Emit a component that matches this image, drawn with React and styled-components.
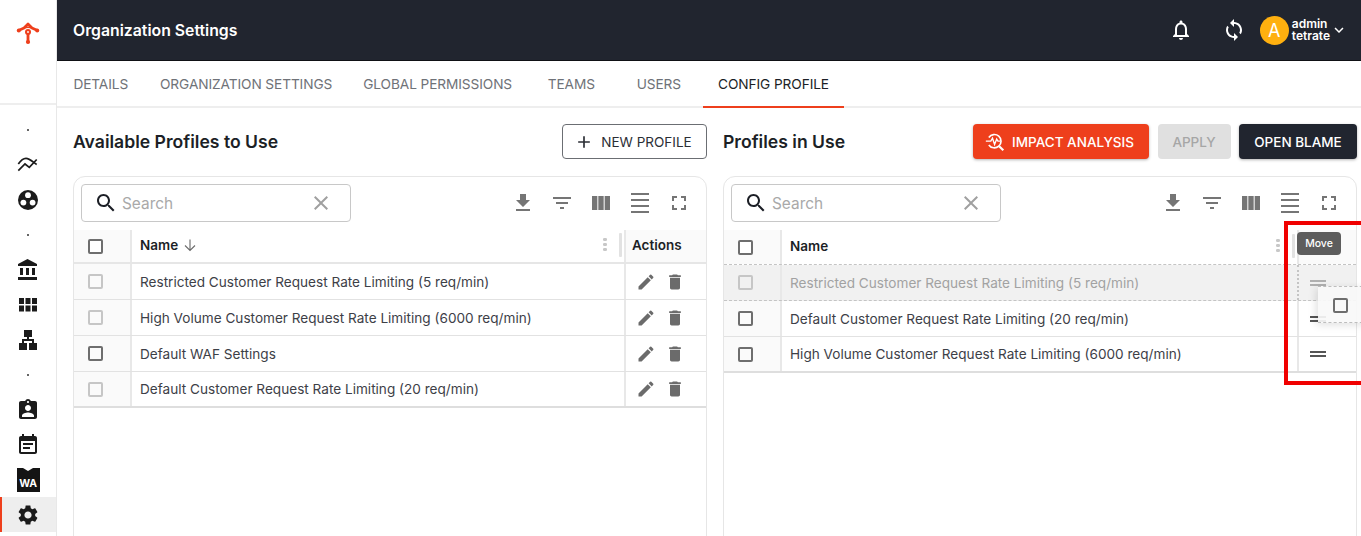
import React from 'react';
import styled, { createGlobalStyle } from 'styled-components';

const GlobalStyle = createGlobalStyle`
  html, body { margin: 0; padding: 0; height: 100%; overflow: hidden; background: #fff; }
  body { font-family: Inter, "Liberation Sans", sans-serif; color: #1c1f26; }
  * { box-sizing: border-box; }
`;

const ICONS = {
  bell: 'M12 22c1.1 0 2-.9 2-2h-4c0 1.1.89 2 2 2zm6-6v-5c0-3.07-1.64-5.64-4.5-6.32V4c0-.83-.67-1.5-1.5-1.5s-1.5.67-1.5 1.5v.68C7.63 5.36 6 7.92 6 11v5l-2 2v1h16v-1l-2-2zm-2 1H8v-6c0-2.48 1.51-4.5 4-4.5s4 2.02 4 4.5v6z',
  sync: 'M12 4V1L8 5l4 4V6c3.31 0 6 2.69 6 6 0 1.01-.25 1.97-.7 2.8l1.46 1.46C19.54 15.03 20 13.57 20 12c0-4.42-3.58-8-8-8zm0 14c-3.31 0-6-2.69-6-6 0-1.01.25-1.97.7-2.8L5.24 7.74C4.46 8.97 4 10.43 4 12c0 4.42 3.58 8 8 8v3l4-4-4-4v3z',
  chevron: 'M7.41 8.59 12 13.17l4.59-4.58L18 10l-6 6-6-6z',
  search: 'M15.5 14h-.79l-.28-.27C15.41 12.59 16 11.11 16 9.5 16 5.91 13.09 3 9.5 3S3 5.91 3 9.5 5.91 16 9.5 16c1.61 0 3.09-.59 4.23-1.57l.27.28v.79l5 4.99L20.49 19l-4.99-5zm-6 0C7.01 14 5 11.99 5 9.5S7.01 5 9.5 5 14 7.01 14 9.5 11.99 14 9.5 14z',
  close: 'M19 6.41 17.59 5 12 10.59 6.41 5 5 6.41 10.59 12 5 17.59 6.41 19 12 13.41 17.59 19 19 17.59 13.41 12z',
  download: 'M19 9h-4V3H9v6H5l7 7 7-7zM5 18v2h14v-2H5z',
  filter: 'M10 18h4v-2h-4v2zM3 6v2h18V6H3zm3 7h12v-2H6v2z',
  columns: 'M14.67 5v14H9.33V5h5.34zm1 14H21V5h-5.33v14zm-7.34 0V5H3v14h5.33z',
  density: 'M3 2h18v2H3zm0 6h18v2H3zm0 6h18v2H3zm0 6h18v2H3z',
  fullscreen: 'M7 14H5v5h5v-2H7v-3zm-2-4h2V7h3V5H5v5zm12 7h-3v2h5v-5h-2v3zM14 5v2h3v3h2V5h-5z',
  edit: 'M3 17.25V21h3.75L17.81 9.94l-3.75-3.75L3 17.25zM20.71 7.04c.39-.39.39-1.02 0-1.41l-2.34-2.34a.9959.9959 0 0 0-1.41 0l-1.83 1.83 3.75 3.75 1.83-1.83z',
  trash: 'M6 19c0 1.1.9 2 2 2h8c1.1 0 2-.9 2-2V7H6v12zM19 4h-3.5l-1-1h-5l-1 1H5v2h14V4z',
  plus: 'M19 13h-6v6h-2v-6H5v-2h6V5h2v6h6v2z',
  bank: 'M4 10v7h3v-7H4zm6 0v7h3v-7h-3zM2 22h19v-3H2v3zm14-12v7h3v-7h-3zm-4.5-9L2 6v2h19V6l-9.5-5z',
  grid: 'M3 5h5v6H3zm6.5 0h5v6h-5zM16 5h5v6h-5zM3 12.5h5v6H3zm6.5 0h5v6h-5zm6.5 0h5v6h-5z',
  lan: 'M13 22h8v-7h-3v-4h-5V9h3V2H8v7h3v2H6v4H3v7h8v-7H8v-2h8v2h-3z',
  badge: 'M19 3h-4.18C14.4 1.84 13.3 1 12 1s-2.4.84-2.82 2H5c-1.1 0-2 .9-2 2v14c0 1.1.9 2 2 2h14c1.1 0 2-.9 2-2V5c0-1.1-.9-2-2-2zm-7 0c.55 0 1 .45 1 1s-.45 1-1 1-1-.45-1-1 .45-1 1-1zm0 4c1.66 0 3 1.34 3 3s-1.34 3-3 3-3-1.34-3-3 1.34-3 3-3zm6 12H6v-1.4c0-2 4-3.1 6-3.1s6 1.1 6 3.1V19z',
  event: 'M17 10H7v2h10v-2zm2-7h-1V1h-2v2H8V1H6v2H5c-1.11 0-1.99.9-1.99 2L3 19c0 1.1.89 2 2 2h14c1.1 0 2-.9 2-2V5c0-1.1-.9-2-2-2zm0 16H5V8h14v11zm-5-5H7v2h7v-2z',
  gear: 'M19.14 12.94c.04-.3.06-.61.06-.94 0-.32-.02-.64-.07-.94l2.03-1.58c.18-.14.23-.41.12-.61l-1.92-3.32c-.12-.22-.37-.29-.59-.22l-2.39.96c-.5-.38-1.03-.7-1.62-.94l-.36-2.54c-.04-.24-.24-.41-.48-.41h-3.84c-.24 0-.43.17-.47.41l-.36 2.54c-.59.24-1.13.57-1.62.94l-2.39-.96c-.22-.08-.47 0-.59.22L2.74 8.87c-.12.21-.08.47.12.61l2.03 1.58c-.05.3-.09.63-.09.94s.02.64.07.94l-2.03 1.58c-.18.14-.23.41-.12.61l1.92 3.32c.12.22.37.29.59.22l2.39-.96c.5.38 1.03.7 1.62.94l.36 2.54c.05.24.24.41.48.41h3.84c.24 0 .44-.17.47-.41l.36-2.54c.59-.24 1.13-.56 1.62-.94l2.39.96c.22.08.47 0 .59-.22l1.92-3.32c.12-.22.07-.47-.12-.61l-2.01-1.58zM12 15.6c-1.98 0-3.6-1.62-3.6-3.6s1.62-3.6 3.6-3.6 3.6 1.62 3.6 3.6-1.62 3.6-3.6 3.6z',
};

const Svg = styled.svg`
  display: block;
  flex: none;
  fill: currentColor;
  width: ${p => p.$size || 24}px;
  height: ${p => p.$size || 24}px;
`;

const Icon = ({ name, size }) => (
  <Svg $size={size} viewBox="0 0 24 24"><path d={ICONS[name]} /></Svg>
);

const Page = styled.div`
  position: relative;
  display: grid;
  grid-template-columns: 57px 1fr;
  width: 1361px;
  height: 536px;
  overflow: hidden;
`;

/* left rail */
const Rail = styled.aside`
  border-right: 1px solid #e8e8e8;
  height: 536px;
`;
const LogoBox = styled.div`
  height: 105px;
  border-bottom: 2px solid #eee;
  padding-top: 21px;
  display: flex;
  justify-content: center;
  align-items: flex-start;
`;
const RailList = styled.nav`
  padding-top: 7px;
  display: flex;
  flex-direction: column;
`;
const RailItem = styled.div`
  height: 35px;
  display: flex;
  align-items: center;
  justify-content: center;
  color: #1b1b1b;
  ${p => p.$active && `
    background: #eeeeee;
    border-left: 2px solid #ee3f1c;
    padding-right: 2px;
  `}
`;
const RailDot = styled.span`
  width: 2px;
  height: 2px;
  border-radius: 50%;
  background: #333;
`;
const WaBadge = styled.div`
  position: relative;
  width: 23px;
  height: 24px;
  background: #141414;
  color: #fff;
  font-size: 10.5px;
  font-weight: 700;
  line-height: 1;
  text-align: center;
  padding-top: 11px;
  letter-spacing: -0.3px;
  &::before {
    content: '';
    position: absolute;
    top: 0;
    left: 6px;
    border-left: 5.5px solid transparent;
    border-right: 5.5px solid transparent;
    border-top: 3px solid #fff;
  }
`;

const Main = styled.div`
  display: flex;
  flex-direction: column;
  min-width: 0;
`;

/* top bar */
const TopBar = styled.header`
  height: 61px;
  background: #21252f;
  border-bottom: 1px solid #0f1115;
  color: #fff;
  display: flex;
  align-items: center;
  padding: 0 13px 0 16px;
`;
const PageTitle = styled.h1`
  flex: 1;
  margin: 0;
  font-size: 15.8px;
  font-weight: 600;
`;
const TopAction = styled.span`
  margin-right: ${p => p.$gap}px;
  display: block;
`;
const Avatar = styled.div`
  width: 29px;
  height: 29px;
  border-radius: 50%;
  background: #ffb00f;
  display: flex;
  align-items: center;
  justify-content: center;
  font-size: 18px;
  margin-right: 3px;
`;
const UserText = styled.div`
  font-size: 12px;
  font-weight: 600;
  line-height: 12.5px;
`;

/* tabs */
const TabBar = styled.div`
  height: 47px;
  border-bottom: 2px solid #eee;
  display: flex;
`;
const Tab = styled.div`
  min-width: 87.5px;
  padding: 0 15.5px;
  height: 47px;
  display: flex;
  align-items: center;
  justify-content: center;
  font-size: 13.7px;
  letter-spacing: -0.1px;
  color: ${p => (p.$active ? '#1c1f26' : '#6f7278')};
  border-bottom: 2px solid ${p => (p.$active ? '#ee3f1c' : 'transparent')};
`;

/* panels */
const Panels = styled.div`
  display: grid;
  grid-template-columns: 634px 634px;
  gap: 16px;
  padding: 16px 4px 0 16px;
`;
const Panel = styled.section`
  min-width: 0;
`;
const PanelHead = styled.div`
  height: 35px;
  display: flex;
  align-items: center;
  gap: 8.5px;
  margin-bottom: 17px;
`;
const PanelTitle = styled.h2`
  flex: 1;
  margin: 0;
  font-size: 17.6px;
  font-weight: 600;
`;
const Button = styled.button`
  height: 35px;
  border-radius: 4px;
  font: 500 13.5px Inter, "Liberation Sans", sans-serif;
  display: flex;
  align-items: center;
  gap: 7px;
  justify-content: center;
  width: ${p => p.$width}px;
  padding: 0;
  border: 1px solid transparent;
  ${p => p.$variant === 'outline' && `
    background: #fff; color: #2b2e35; border-color: #6b6e73; font-weight: 400; padding-right: 3px;
  `}
  ${p => p.$variant === 'danger' && `
    background: #ee3f1c; color: #fff; box-shadow: 0 1px 3px rgba(0,0,0,.3); padding-right: 3px;
  `}
  ${p => p.$variant === 'disabled' && `
    background: #e0e0e0; color: #a6a6a6;
  `}
  ${p => p.$variant === 'dark' && `
    background: #21252f; color: #fff; box-shadow: 0 1px 3px rgba(0,0,0,.3);
  `}
`;

const Card = styled.div`
  height: 400px;
  border: 1px solid #e6e6e6;
  border-radius: 12px 12px 0 0;
`;
const Toolbar = styled.div`
  height: 53px;
  padding: 7px 0 0 7px;
  display: flex;
`;
const SearchBox = styled.div`
  width: 270px;
  height: 38px;
  border: 1px solid #c8c8c8;
  border-radius: 4px;
  display: flex;
  align-items: center;
  padding: 0 17px 0 12px;
  color: #1c1f26;
`;
const SearchText = styled.span`
  flex: 1;
  margin-left: 4px;
  font-size: 15.4px;
  color: #a9a9a9;
`;
const ClearIcon = styled.span`
  color: #a0a0a0;
`;
const ToolIcons = styled.div`
  margin-left: auto;
  padding-right: 15px;
  display: flex;
  gap: 15px;
  height: 24px;
  color: #757575;
  margin-top: 7px;
`;

const Row = styled.div`
  display: grid;
  grid-template-columns: 58px 1fr ${p => p.$actions}px;
  height: ${p => p.$height || 36}px;
  font-size: 13.6px;
  border-bottom: 1px solid #e2e2e2;
  ${p => p.$last && `border-bottom: 2px solid #dedede;`}
  ${p => p.$dragged && `
    background: #f1f1f1;
    color: #a2a2a2;
    border-bottom: 1px dashed #c4c4c4;
  `}
  ${p => p.$dashed && `border-bottom: 1px dashed #c4c4c4;`}
  ${p => p.$head && !p.$dashed && `border-bottom: 2px solid #e6e6e6;`}
`;
const CheckCell = styled.div`
  display: flex;
  align-items: center;
  padding-left: 14px;
  background: ${p => (p.$plain ? 'transparent' : '#fafafa')};
  border-right: 2px solid #e8e8e8;
`;
const Check = styled.span`
  display: block;
  width: 15px;
  height: 15px;
  border-radius: 2px;
  border: 2px solid ${p => (p.$muted ? '#c6c6c6' : '#6e6e6e')};
  background: ${p => (p.$light ? '#fff' : 'transparent')};
`;
const NameCell = styled.div`
  display: flex;
  align-items: center;
  padding: 0 2px 0 8px;
  color: ${p => (p.$dim ? '#a2a2a2' : '#3d4047')};
`;
const HeadLabel = styled.span`
  font-size: 13.5px;
  font-weight: 600;
  color: #1c1f26;
  display: flex;
  align-items: center;
  gap: 5px;
  margin-top: -3px;
`;
const SortArrow = styled.svg`
  width: 14px;
  height: 14px;
  fill: none;
  stroke: #6b6b6b;
  stroke-width: 1.1;
`;
const ColumnMenu = styled.span`
  margin-left: auto;
  margin-right: 12.5px;
  width: 4px;
  height: 15px;
  margin-top: -3px;
  background: radial-gradient(circle at center, #c8c8c8 1.7px, transparent 2px) 0 0 / 4px 5px repeat-y;
`;
const ResizeGrip = styled.span`
  width: 3px;
  height: 24px;
  margin-top: -3px;
  border-radius: 1px;
  background: #e2e2e2;
`;
const ActionCell = styled.div`
  display: flex;
  align-items: center;
  gap: 9px;
  padding-left: ${p => (p.$head ? 6 : 10)}px;
  border-left: 2px solid #e8e8e8;
  background: ${p => (p.$head ? '#fafafa' : 'transparent')};
  color: #6b6b6b;
`;
const DragHandle = styled.span`
  width: 16px;
  height: 6px;
  margin-left: 1px;
  border-top: 2px solid #555;
  border-bottom: 2px solid #555;
  ${p => p.$dim && `border-color: #b0b0b0;`}
`;
const DraggedEdge = styled(ActionCell)`
  border-left: 2px dotted #c4c4c4;
`;

/* overlays for the drag in progress */
const Ghost = styled.div`
  position: absolute;
  left: 1318px;
  top: 286px;
  width: 50px;
  height: 37px;
  background: rgba(248, 248, 248, 0.92);
  border-top: 1px dashed #bdbdbd;
  border-bottom: 1px dashed #bdbdbd;
  box-shadow: -2px 2px 8px rgba(0, 0, 0, 0.12);
  padding: 11px 0 0 15px;
`;
const Tooltip = styled.div`
  position: absolute;
  left: 1297px;
  top: 232px;
  width: 44px;
  height: 23px;
  background: #5d5d5d;
  color: #fff;
  border-radius: 4px;
  font-size: 10.5px;
  font-weight: 500;
  display: flex;
  align-items: center;
  justify-content: center;
`;
const Highlight = styled.div`
  position: absolute;
  left: 1284px;
  top: 221px;
  width: 85px;
  height: 164px;
  border: 4px solid #f00000;
`;

const Logo = () => (
  <Svg $size={24} viewBox="0 0 24 24">
    <g fill="none" stroke="#ee3f1c" strokeLinecap="round" strokeLinejoin="round">
      <path d="M2.5 9.5 L8 7 L12 3 L16 7 L21.5 9.5" strokeWidth="2.7" />
      <path d="M8 7 Q12 5.4 16 7" strokeWidth="1.6" />
      <path d="M12 11 V21" strokeWidth="2.8" />
    </g>
    <circle cx="2.8" cy="9.6" r="2" fill="#ee3f1c" />
    <circle cx="21.2" cy="9.6" r="2" fill="#ee3f1c" />
    <circle cx="12" cy="11" r="3" fill="#ee3f1c" />
    <circle cx="12" cy="11" r="0.9" fill="#fff" />
    <circle cx="12" cy="21" r="2.1" fill="#ee3f1c" />
  </Svg>
);

const TrendIcon = () => (
  <Svg viewBox="0 0 24 24">
    <g fill="none" stroke="currentColor" strokeWidth="1.7">
      <path d="M2.3 11 C5 7 7.5 5.3 10 5.3 C13.5 5.3 17 9 20.7 11.5" />
      <path d="M2.3 17.7 L9 11 L13.3 14.3 L20.7 6.5" />
    </g>
  </Svg>
);

const CrewIcon = () => (
  <Svg viewBox="0 0 24 24">
    <circle cx="12" cy="12" r="10" />
    <g fill="#fff">
      <circle cx="12" cy="7.2" r="2.9" />
      <circle cx="7.4" cy="14.6" r="2.9" />
      <circle cx="16.6" cy="14.6" r="2.9" />
    </g>
  </Svg>
);

const ImpactIcon = () => (
  <Svg $size={20} viewBox="0 0 24 24">
    <g fill="none" stroke="currentColor" strokeWidth="2">
      <path d="M4.6 6.5 A8 8 0 1 1 4.6 15.5" />
      <path d="M17 17 L22 22" strokeWidth="2.6" />
      <path d="M1 11 H7 L9 7.5 L11.5 15 L14 8.5 L15.5 11 H18" strokeWidth="1.6" />
    </g>
  </Svg>
);

const rail = [
  { dot: true },
  { node: <TrendIcon /> },
  { node: <CrewIcon /> },
  { dot: true },
  { node: <Icon name="bank" /> },
  { node: <Icon name="grid" /> },
  { node: <Icon name="lan" /> },
  { dot: true },
  { node: <Icon name="badge" /> },
  { node: <Icon name="event" /> },
  { node: <WaBadge>WA</WaBadge> },
  { node: <Icon name="gear" />, active: true },
];

const tabs = ['DETAILS', 'ORGANIZATION SETTINGS', 'GLOBAL PERMISSIONS', 'TEAMS', 'USERS', 'CONFIG PROFILE'];

const available = [
  { name: 'Restricted Customer Request Rate Limiting (5 req/min)', muted: true },
  { name: 'High Volume Customer Request Rate Limiting (6000 req/min)', muted: true },
  { name: 'Default WAF Settings', muted: false },
  { name: 'Default Customer Request Rate Limiting (20 req/min)', muted: true },
];

const inUse = [
  { name: 'Restricted Customer Request Rate Limiting (5 req/min)', dragged: true },
  { name: 'Default Customer Request Rate Limiting (20 req/min)' },
  { name: 'High Volume Customer Request Rate Limiting (6000 req/min)' },
];

const TableTools = () => (
  <Toolbar>
    <SearchBox>
      <Icon name="search" />
      <SearchText>Search</SearchText>
      <ClearIcon><Icon name="close" /></ClearIcon>
    </SearchBox>
    <ToolIcons>
      <Icon name="download" />
      <Icon name="filter" />
      <Icon name="columns" />
      <Icon name="density" />
      <Icon name="fullscreen" />
    </ToolIcons>
  </Toolbar>
);

const App = () => (
  <Page>
    <GlobalStyle />
    <Rail>
      <LogoBox><Logo /></LogoBox>
      <RailList>
        {rail.map((item, i) => (
          <RailItem key={i} $active={item.active}>
            {item.dot ? <RailDot /> : item.node}
          </RailItem>
        ))}
      </RailList>
    </Rail>

    <Main>
      <TopBar>
        <PageTitle>Organization Settings</PageTitle>
        <TopAction $gap={29}><Icon name="bell" /></TopAction>
        <TopAction $gap={14}><Icon name="sync" /></TopAction>
        <Avatar>A</Avatar>
        <UserText>admin<br />tetrate</UserText>
        <Icon name="chevron" size={18} />
      </TopBar>

      <TabBar>
        {tabs.map(t => (
          <Tab key={t} $active={t === 'CONFIG PROFILE'}>{t}</Tab>
        ))}
      </TabBar>

      <Panels>
        <Panel>
          <PanelHead>
            <PanelTitle>Available Profiles to Use</PanelTitle>
            <Button $variant="outline" $width={145}><Icon name="plus" size={20} />NEW PROFILE</Button>
          </PanelHead>
          <Card>
            <TableTools />
            <Row $actions={82} $height={34} $head>
              <CheckCell><Check $light /></CheckCell>
              <NameCell>
                <HeadLabel>
                  Name
                  <SortArrow viewBox="0 0 14 14"><path d="M7 1.5 V12.5 M2 7.5 L7 12.5 L12 7.5" /></SortArrow>
                </HeadLabel>
                <ColumnMenu />
                <ResizeGrip />
              </NameCell>
              <ActionCell $head><HeadLabel>Actions</HeadLabel></ActionCell>
            </Row>
            {available.map((r, i) => (
              <Row key={r.name} $actions={82} $last={i === available.length - 1}>
                <CheckCell><Check $muted={r.muted} /></CheckCell>
                <NameCell>{r.name}</NameCell>
                <ActionCell>
                  <Icon name="edit" size={20} />
                  <Icon name="trash" size={20} />
                </ActionCell>
              </Row>
            ))}
          </Card>
        </Panel>

        <Panel>
          <PanelHead>
            <PanelTitle>Profiles in Use</PanelTitle>
            <Button $variant="danger" $width={176}><ImpactIcon />IMPACT ANALYSIS</Button>
            <Button $variant="disabled" $width={73}>APPLY</Button>
            <Button $variant="dark" $width={118}>OPEN BLAME</Button>
          </PanelHead>
          <Card>
            <TableTools />
            <Row $actions={59} $height={35} $head $dashed>
              <CheckCell><Check $light /></CheckCell>
              <NameCell>
                <HeadLabel>Name</HeadLabel>
                <ColumnMenu />
                <ResizeGrip />
              </NameCell>
              <ActionCell $head />
            </Row>
            {inUse.map((r, i) => (
              <Row key={r.name} $actions={59} $dragged={r.dragged} $last={i === inUse.length - 1}>
                <CheckCell $plain={r.dragged}><Check $muted={r.dragged} /></CheckCell>
                <NameCell $dim={r.dragged}>{r.name}</NameCell>
                {r.dragged
                  ? <DraggedEdge><DragHandle $dim /></DraggedEdge>
                  : <ActionCell><DragHandle /></ActionCell>}
              </Row>
            ))}
          </Card>
        </Panel>
      </Panels>
    </Main>

    <Ghost><Check /></Ghost>
    <Tooltip>Move</Tooltip>
    <Highlight />
  </Page>
);

export default App;
